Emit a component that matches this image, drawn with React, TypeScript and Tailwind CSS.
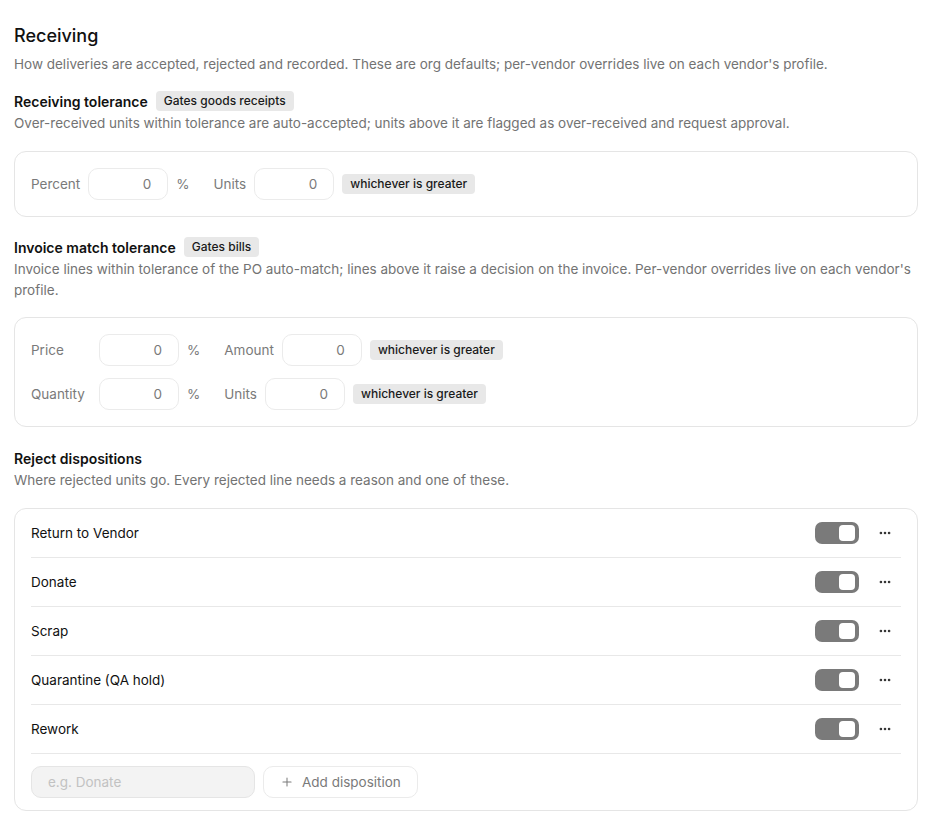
import { Ellipsis, Plus } from "lucide-react";

const font = { fontFamily: "Inter, 'Noto Sans', sans-serif" };

function Badge({ children }: { children: React.ReactNode }) {
  return (
    <span className="inline-flex h-5 items-center rounded-[4px] bg-[#e8e8e8] px-2 text-[12px] font-medium text-[#1a1a1a]">
      {children}
    </span>
  );
}

function NumInput({ value = "0" }: { value?: string }) {
  return (
    <div className="flex h-8 w-20 items-center justify-end rounded-[10px] border border-[#ebebeb] bg-white px-4 text-[13.5px] text-[#7a7a7a]">
      {value}
    </div>
  );
}

function SectionHead({ title, badge, desc }: { title: string; badge?: string; desc: string }) {
  return (
    <>
      <div className="flex h-5 items-center gap-2">
        <span className="text-[14px] font-semibold text-[#111]">{title}</span>
        {badge && <Badge>{badge}</Badge>}
      </div>
      <p className="mt-0.5 text-[13.5px] leading-[21px] text-[#737373]">{desc}</p>
    </>
  );
}

function Toggle() {
  return (
    <div className="relative h-[22px] w-[44px] rounded-[7px] bg-[#7a7a7a]">
      <div className="absolute right-[4px] top-[3px] h-4 w-4 rounded-[4px] bg-white" />
    </div>
  );
}

const dispositions = ["Return to Vendor", "Donate", "Scrap", "Quarantine (QA hold)", "Rework"];

export default function App() {
  return (
    <div className="min-h-screen bg-white pl-[14px] pr-[22px] pt-[22px] pb-6" style={font}>
      <h1 className="text-[18px] font-medium leading-7 text-[#111]">Receiving</h1>
      <p className="mt-1 text-[13.5px] leading-[21px] text-[#737373]">
        How deliveries are accepted, rejected and recorded. These are org defaults; per-vendor overrides live on each vendor's profile.
      </p>

      {/* Receiving tolerance */}
      <div className="mt-4">
        <SectionHead
          title="Receiving tolerance"
          badge="Gates goods receipts"
          desc="Over-received units within tolerance are auto-accepted; units above it are flagged as over-received and request approval."
        />
        <div className="mt-[17px] rounded-xl border border-[#e5e5e5] p-4">
          <div className="flex items-center gap-6 text-[13.5px] text-[#7a7a7a]">
            <div className="flex items-center gap-2">
              <span>Percent</span>
              <NumInput />
              <span>%</span>
            </div>
            <div className="flex items-center gap-2">
              <span>Units</span>
              <NumInput />
              <Badge>whichever is greater</Badge>
            </div>
          </div>
        </div>
      </div>

      {/* Invoice match tolerance */}
      <div className="mt-5">
        <SectionHead
          title="Invoice match tolerance"
          badge="Gates bills"
          desc="Invoice lines within tolerance of the PO auto-match; lines above it raise a decision on the invoice. Per-vendor overrides live on each vendor's profile."
        />
        <div className="mt-4 flex flex-col gap-3 rounded-xl border border-[#e5e5e5] p-4 text-[13.5px] text-[#7a7a7a]">
          {[
            ["Price", "Amount"],
            ["Quantity", "Units"],
          ].map(([a, b]) => (
            <div key={a} className="flex items-center gap-6">
              <div className="flex items-center gap-2">
                <span className="w-[60px]">{a}</span>
                <NumInput />
                <span>%</span>
              </div>
              <div className="flex items-center gap-2">
                <span>{b}</span>
                <NumInput />
                <Badge>whichever is greater</Badge>
              </div>
            </div>
          ))}
        </div>
      </div>

      {/* Reject dispositions */}
      <div className="mt-[21px]">
        <SectionHead
          title="Reject dispositions"
          desc="Where rejected units go. Every rejected line needs a reason and one of these."
        />
        <div className="mt-[17px] rounded-xl border border-[#e5e5e5] px-4">
          {dispositions.map((d) => (
            <div key={d} className="flex h-[49px] items-center border-b border-[#e8e8e8] text-[13.5px] text-[#111]">
              <span className="flex-1">{d}</span>
              <Toggle />
              <button className="ml-[10px] flex h-6 w-8 items-center justify-center text-[#333]">
                <Ellipsis size={14} strokeWidth={2.5} />
              </button>
            </div>
          ))}
          <div className="flex items-center gap-2 py-3">
            <div className="flex h-8 w-[224px] items-center rounded-[10px] border border-[#e5e5e5] bg-[#f3f3f3] px-4 text-[13.5px] text-[#c2c2c2]">
              e.g. Donate
            </div>
            <button className="flex h-8 items-center gap-2 rounded-[10px] border border-[#ebebeb] bg-white px-4 text-[13.5px] text-[#7a7a7a]">
              <Plus size={14} strokeWidth={1.75} />
              Add disposition
            </button>
          </div>
        </div>
      </div>
    </div>
  );
}
